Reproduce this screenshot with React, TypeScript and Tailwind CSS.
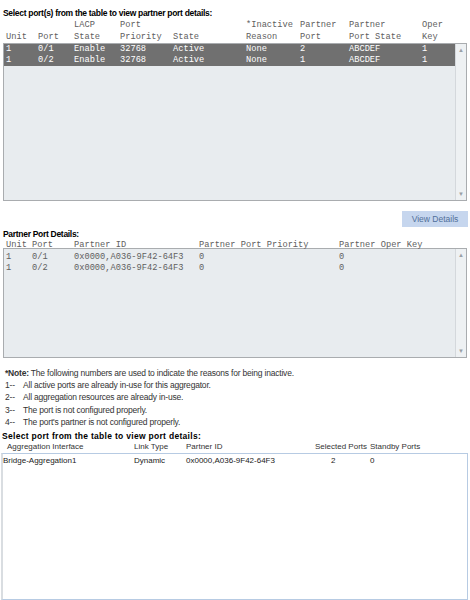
const mono = { fontFamily: '"Liberation Mono", "Courier New", monospace' };

function ScrollBar() {
  return (
    <div className="flex w-[11px] shrink-0 flex-col justify-between border-l border-[#d4d8dc] bg-[#eef1f3] py-[3px] text-center text-[6px] leading-none text-[#9aa0a6]">
      <span>▲</span>
      <span>▼</span>
    </div>
  );
}

const partnerRows = [
  ["1", "0/1", "Enable", "32768", "Active", "None", "2", "ABCDEF", "1"],
  ["1", "0/2", "Enable", "32768", "Active", "None", "1", "ABCDEF", "1"],
];

const cols1 = ["w-[32px]", "w-[36px]", "w-[46px]", "w-[53px]", "w-[73px]", "w-[54px]", "w-[49px]", "w-[73px]", "w-[30px]"];

const detailRows = [
  ["1", "0/1", "0x0000,A036-9F42-64F3", "0", "0"],
  ["1", "0/2", "0x0000,A036-9F42-64F3", "0", "0"],
];
const cols2 = ["w-[26px]", "w-[42px]", "w-[125px]", "w-[140px]", "w-[80px]"];

const notes = [
  "All active ports are already in-use for this aggregator.",
  "All aggregation resources are already in-use.",
  "The port is not configured properly.",
  "The port's partner is not configured properly.",
];

export default function App() {
  return (
    <div className="h-[600px] w-[470px] overflow-hidden bg-white text-black" style={{ fontFamily: '"Liberation Sans", Arial, sans-serif' }}>
      {/* partner port table */}
      <div className="pl-[3px] pt-[7px] text-[8.5px] font-bold leading-[12px] tracking-[-0.3px]">
        Select port(s) from the table to view partner port details:
      </div>
      <div className="flex pl-[6px] text-[8.7px] leading-[12px] text-[#606060]" style={mono}>
        {[
          ["", "Unit"],
          ["", "Port"],
          ["LACP", "State"],
          ["Port", "Priority"],
          ["", "State"],
          ["*Inactive", "Reason"],
          ["Partner", "Port"],
          ["Partner", "Port State"],
          ["Oper", "Key"],
        ].map((h, i) => (
          <div key={i} className={`${cols1[i]} shrink-0 whitespace-pre`}>
            <div>{h[0] || " "}</div>
            <div>{h[1]}</div>
          </div>
        ))}
      </div>
      <div className="mx-[3px] mt-0 flex h-[158px] w-[464px] border border-[#a9acaf] bg-[#e8ecef]">
        <div className="flex-1">
          {partnerRows.map((r, ri) => (
            <div key={ri} className="flex h-[11px] bg-[#707070] pl-[2px] text-[8.7px] leading-[11px] text-white" style={mono}>
              {r.map((c, i) => (
                <div key={i} className={`${cols1[i]} shrink-0`}>{c}</div>
              ))}
            </div>
          ))}
        </div>
        <ScrollBar />
      </div>

      <div className="mt-[10px] flex justify-end pr-[2px]">
        <button className="h-[16px] w-[66px] bg-[#c6d6ee] text-[8.5px] leading-[16px] text-[#51709a]">View Details</button>
      </div>

      {/* partner port details */}
      <div className="pl-[3px] pt-[1px] text-[8.5px] font-bold leading-[12px] tracking-[-0.3px]">Partner Port Details:</div>
      <div className="flex pl-[6px] text-[8.7px] leading-[10px] text-[#606060]" style={mono}>
        {["Unit", "Port", "Partner ID", "Partner Port Priority", "Partner Oper Key"].map((h, i) => (
          <div key={i} className={`${cols2[i]} shrink-0 whitespace-pre`}>{h}</div>
        ))}
      </div>
      <div className="mx-[3px] mt-[-2px] flex h-[110px] w-[464px] border border-[#a9acaf] bg-[#e8ecef]">
        <div className="flex-1 pt-[3px]">
          {detailRows.map((r, ri) => (
            <div key={ri} className="flex h-[11px] pl-[2px] text-[8.7px] leading-[11px] text-[#606060]" style={mono}>
              {r.map((c, i) => (
                <div key={i} className={`${cols2[i]} shrink-0`}>{c}</div>
              ))}
            </div>
          ))}
        </div>
        <ScrollBar />
      </div>

      {/* notes */}
      <div className="pl-[5px] pt-[9px] text-[8.5px] leading-[12.2px] tracking-[-0.2px] text-[#333]">
        <div>
          <span className="font-bold">*Note:</span> The following numbers are used to indicate the reasons for being inactive.
        </div>
        {notes.map((n, i) => (
          <div key={i} className="flex">
            <span className="w-[18px] shrink-0">{i + 1}--</span>
            <span>{n}</span>
          </div>
        ))}
      </div>

      {/* aggregation table */}
      <div className="pl-[2px] pt-[2px] text-[8.5px] font-bold leading-[12px] tracking-[0.3px]">Select port from the table to view port details:</div>
      <div className="flex whitespace-nowrap pl-[7px] text-[8px] leading-[10px] text-[#333]">
        <div className="w-[127px] shrink-0">Aggregation Interface</div>
        <div className="w-[52px] shrink-0">Link Type</div>
        <div className="w-[129px] shrink-0">Partner ID</div>
        <div className="w-[55px] shrink-0">Selected Ports</div>
        <div>Standby Ports</div>
      </div>
      <div className="ml-[1px] mt-[1px] h-[147px] w-[467px] border border-l-2 border-[#b7cbe3] border-l-[#d9dde1] bg-white text-[8px] leading-[13px] text-[#222]">
        <div className="flex whitespace-nowrap">
          <div className="w-[131px] shrink-0">Bridge-Aggregation1</div>
          <div className="w-[52px] shrink-0">Dynamic</div>
          <div className="w-[145px] shrink-0">0x0000,A036-9F42-64F3</div>
          <div className="w-[39px] shrink-0">2</div>
          <div>0</div>
        </div>
      </div>
    </div>
  );
}
